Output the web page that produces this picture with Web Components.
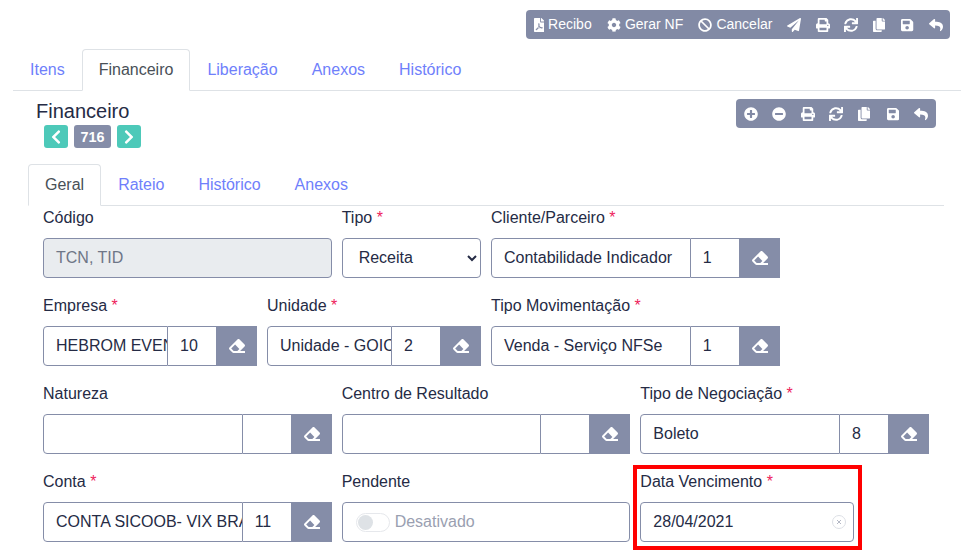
<!DOCTYPE html>
<html lang="pt-BR">
<head>
<meta charset="utf-8">
<title>Financeiro</title>
<style>
  html, body { margin: 0; height: 100%; overflow: hidden; background: #fff; }
  body { font-family: "Liberation Sans", Arial, sans-serif; font-size: 16px; color: #252b45; }
</style>
</head>
<body>
<app-page>
  <tool-bar slot="top">
    <tool-button icon="pdf">Recibo</tool-button>
    <tool-button icon="cog">Gerar NF</tool-button>
    <tool-button icon="ban">Cancelar</tool-button>
    <tool-button icon="plane"></tool-button>
    <tool-button icon="print"></tool-button>
    <tool-button icon="sync"></tool-button>
    <tool-button icon="copy"></tool-button>
    <tool-button icon="save"></tool-button>
    <tool-button icon="reply"></tool-button>
  </tool-bar>

  <tab-nav slot="tabs">
    <tab-item>Itens</tab-item>
    <tab-item active>Financeiro</tab-item>
    <tab-item>Liberação</tab-item>
    <tab-item>Anexos</tab-item>
    <tab-item>Histórico</tab-item>
  </tab-nav>

  <record-header slot="header" title="Financeiro" record="716">
    <tool-bar>
      <tool-button icon="plus"></tool-button>
      <tool-button icon="minus"></tool-button>
      <tool-button icon="print"></tool-button>
      <tool-button icon="sync"></tool-button>
      <tool-button icon="copy"></tool-button>
      <tool-button icon="save"></tool-button>
      <tool-button icon="reply"></tool-button>
    </tool-bar>
  </record-header>

  <tab-nav slot="subtabs">
    <tab-item active>Geral</tab-item>
    <tab-item>Rateio</tab-item>
    <tab-item>Histórico</tab-item>
    <tab-item>Anexos</tab-item>
  </tab-nav>

  <form-row slot="form">
    <form-field label="Código" span="4"><text-input value="TCN, TID" disabled></text-input></form-field>
    <form-field label="Tipo" required span="2"><select-input value="Receita"></select-input></form-field>
    <form-field label="Cliente/Parceiro" required span="4"><lookup-input text="Contabilidade Indicador" code="1"></lookup-input></form-field>
  </form-row>
  <form-row slot="form">
    <form-field label="Empresa" required span="3"><lookup-input text="HEBROM EVEN" code="10"></lookup-input></form-field>
    <form-field label="Unidade" required span="3"><lookup-input text="Unidade - GOIC" code="2"></lookup-input></form-field>
    <form-field label="Tipo Movimentação" required span="4"><lookup-input text="Venda - Serviço NFSe" code="1"></lookup-input></form-field>
  </form-row>
  <form-row slot="form">
    <form-field label="Natureza" span="4"><lookup-input></lookup-input></form-field>
    <form-field label="Centro de Resultado" span="4"><lookup-input></lookup-input></form-field>
    <form-field label="Tipo de Negociação" required span="4"><lookup-input text="Boleto" code="8"></lookup-input></form-field>
  </form-row>
  <form-row slot="form">
    <form-field label="Conta" required span="4"><lookup-input text="CONTA SICOOB- VIX BRA" code="11"></lookup-input></form-field>
    <form-field label="Pendente" span="4"><switch-input label="Desativado"></switch-input></form-field>
    <form-field label="Data Vencimento" required span="3" marked><text-input value="28/04/2021" clearable></text-input></form-field>
  </form-row>
</app-page>

<script>
const ICONS = {
  pdf: [384, "M181.9 256.1c-5-16-4.9-46.9-2-46.9 8.4 0 7.6 36.9 2 46.9zm-1.7 47.2c-7.7 20.2-17.3 43.3-28.4 62.7 18.3-7 39-17.2 62.9-21.9-12.7-9.6-24.9-23.4-34.5-40.8zM86.1 428.1c0 .8 13.2-5.4 34.9-40.2-6.7 6.3-29.1 24.5-34.9 40.2zM248 160h136v328c0 13.3-10.7 24-24 24H24c-13.3 0-24-10.7-24-24V24C0 10.7 10.7 0 24 0h200v136c0 13.2 10.8 24 24 24zm-8 171.8c-20-12.2-33.3-29-42.7-53.8 4.5-18.5 11.6-46.6 6.2-64.2-4.7-29.4-42.4-26.5-47.8-6.8-5 18.3-.4 44.1 8.1 77-11.6 27.6-28.7 64.6-40.8 85.8-.1 0-.1.1-.2.1-27.1 13.9-73.6 44.5-54.5 68 5.6 6.9 16 10 21.5 10 17.9 0 35.7-18 61.1-61.8 25.8-8.5 54.1-19.1 79-23.2 21.7 11.8 47.1 19.5 64 19.5 29.2 0 31.2-32 19.7-43.4-13.9-13.6-54.3-9.7-73.6-7.2zM377 105L279 7c-4.5-4.5-10.6-7-17-7h-6v128h128v-6.1c0-6.3-2.5-12.4-7-16.9zm-74.1 255.3c4.1-2.7-2.5-11.9-42.8-9 37.1 15.8 42.8 9 42.8 9z"],
  cog: [512, "M487.4 315.7l-42.6-24.6c4.3-23.2 4.3-47 0-70.2l42.6-24.6c4.9-2.8 7.1-8.6 5.5-14-11.1-35.6-30-67.8-54.7-94.6-3.8-4.1-10-5.1-14.8-2.3L380.8 110c-17.9-15.4-38.5-27.3-60.8-35.1V25.8c0-5.6-3.9-10.5-9.4-11.7-36.7-8.2-74.3-7.8-109.2 0-5.5 1.2-9.4 6.1-9.4 11.7V75c-22.2 7.9-42.8 19.8-60.8 35.1L88.7 85.5c-4.9-2.8-11-1.9-14.8 2.3-24.7 26.7-43.6 58.9-54.7 94.6-1.7 5.4.6 11.2 5.5 14L67.3 221c-4.3 23.2-4.3 47 0 70.2l-42.6 24.6c-4.9 2.8-7.1 8.6-5.5 14 11.1 35.6 30 67.8 54.7 94.6 3.8 4.1 10 5.1 14.8 2.3l42.6-24.6c17.9 15.4 38.5 27.3 60.8 35.1v49.2c0 5.6 3.9 10.5 9.4 11.7 36.7 8.2 74.3 7.8 109.2 0 5.5-1.2 9.4-6.1 9.4-11.7v-49.2c22.2-7.9 42.8-19.8 60.8-35.1l42.6 24.6c4.9 2.8 11 1.9 14.8-2.3 24.7-26.7 43.6-58.9 54.7-94.6 1.5-5.5-.7-11.3-5.6-14.1zM256 336c-44.1 0-80-35.9-80-80s35.9-80 80-80 80 35.9 80 80-35.9 80-80 80z"],
  ban: [512, "M256 8C119.034 8 8 119.033 8 256s111.034 248 248 248 248-111.034 248-248S392.967 8 256 8zm130.108 117.892c65.448 65.448 70 165.481 20.677 235.637L150.47 105.216c70.204-49.356 170.226-44.735 235.638 20.676zM125.892 386.108c-65.448-65.448-70-165.481-20.677-235.637L361.53 406.784c-70.203 49.356-170.226 44.736-235.638-20.676z"],
  plane: [512, "M476 3.2L12.5 270.6c-18.1 10.4-15.8 35.6 2.2 43.2L121 358.4l287.3-253.2c5.5-4.9 13.3 2.6 8.6 8.3L176 407v80.5c0 23.6 28.5 32.9 42.5 15.8L282 426l124.6 52.2c14.2 6 30.4-2.9 33-18.2l72-432C515 7.8 493.3-6.8 476 3.2z"],
  print: [512, "M448 192V77.25c0-8.49-3.37-16.62-9.37-22.63L393.37 9.37c-6-6-14.14-9.37-22.63-9.37H96C78.33 0 64 14.33 64 32v160c-35.35 0-64 28.65-64 64v112c0 8.84 7.16 16 16 16h48v96c0 17.67 14.33 32 32 32h320c17.67 0 32-14.33 32-32v-96h48c8.84 0 16-7.16 16-16V256c0-35.35-28.65-64-64-64zm-64 256H128v-96h256v96zm0-224H128V64h192v48c0 8.84 7.16 16 16 16h48v96zm48 72c-13.25 0-24-10.75-24-24 0-13.26 10.75-24 24-24s24 10.74 24 24c0 13.25-10.75 24-24 24z"],
  sync: [512, "M440.65 12.57l4 82.77A247.16 247.16 0 0 0 255.83 8C134.73 8 33.91 94.92 12.29 209.82A12 12 0 0 0 24.09 224h49.05a12 12 0 0 0 11.67-9.26 175.91 175.91 0 0 1 317-56.94l-101.46-4.86a12 12 0 0 0-12.57 12v47.41a12 12 0 0 0 12 12H500a12 12 0 0 0 12-12V12a12 12 0 0 0-12-12h-47.37a12 12 0 0 0-11.98 12.57zM255.83 432a175.61 175.61 0 0 1-146-77.8l101.8 4.87a12 12 0 0 0 12.57-12v-47.4a12 12 0 0 0-12-12H12a12 12 0 0 0-12 12V500a12 12 0 0 0 12 12h47.35a12 12 0 0 0 12-12.6l-4.15-82.57A247.17 247.17 0 0 0 255.83 504c121.11 0 221.93-86.92 243.55-201.82a12 12 0 0 0-11.8-14.18h-49.05a12 12 0 0 0-11.67 9.26A175.86 175.86 0 0 1 255.83 432z"],
  copy: [448, "M320 448v40c0 13.255-10.745 24-24 24H24c-13.255 0-24-10.745-24-24V120c0-13.255 10.745-24 24-24h72v296c0 30.879 25.121 56 56 56h168zm0-344V0H152c-13.255 0-24 10.745-24 24v368c0 13.255 10.745 24 24 24h272c13.255 0 24-10.745 24-24V128H344c-13.2 0-24-10.8-24-24zm120.971-31.029L375.029 7.029A24 24 0 0 0 358.059 0H352v96h96v-6.059a24 24 0 0 0-7.029-16.97z"],
  save: [448, "M433.941 129.941l-83.882-83.882A48 48 0 0 0 316.118 32H48C21.49 32 0 53.49 0 80v352c0 26.51 21.49 48 48 48h352c26.51 0 48-21.49 48-48V163.882a48 48 0 0 0-14.059-33.941zM224 416c-35.346 0-64-28.654-64-64 0-35.346 28.654-64 64-64s64 28.654 64 64c0 35.346-28.654 64-64 64zm96-304.52V212c0 6.627-5.373 12-12 12H76c-6.627 0-12-5.373-12-12V108c0-6.627 5.373-12 12-12h228.52c3.183 0 6.235 1.264 8.485 3.515l3.48 3.48A11.996 11.996 0 0 1 320 111.48z"],
  reply: [512, "M8.309 189.836L184.313 37.851C199.719 24.546 224 35.347 224 56.015v80.053c160.629 1.839 288 34.032 288 186.258 0 61.441-39.581 122.309-83.333 154.132-13.653 9.931-33.111-2.533-28.077-18.631 45.344-145.012-21.507-183.51-176.59-185.742V360c0 20.7-24.3 31.453-39.687 18.164l-176.004-152c-11.071-9.562-11.086-26.753 0-36.328z"],
  plus: [512, "M256 8C119 8 8 119 8 256s111 248 248 248 248-111 248-248S393 8 256 8zm144 276c0 6.6-5.4 12-12 12h-92v92c0 6.6-5.4 12-12 12h-56c-6.6 0-12-5.4-12-12v-92h-92c-6.6 0-12-5.4-12-12v-56c0-6.6 5.4-12 12-12h92v-92c0-6.6 5.4-12 12-12h56c6.6 0 12 5.4 12 12v92h92c6.6 0 12 5.4 12 12v56z"],
  minus: [512, "M256 8C119 8 8 119 8 256s111 248 248 248 248-111 248-248S393 8 256 8zM124 296c-6.6 0-12-5.4-12-12v-56c0-6.6 5.4-12 12-12h264c6.6 0 12 5.4 12 12v56c0 6.6-5.4 12-12 12H124z"],
  eraser: [512, "M497.941 273.941c18.745-18.745 18.745-49.137 0-67.882l-160-160c-18.745-18.745-49.136-18.746-67.883 0l-256 256c-18.745 18.745-18.745 49.137 0 67.882l96 96A48.004 48.004 0 0 0 144 480h356c6.627 0 12-5.373 12-12v-40c0-6.627-5.373-12-12-12H355.883l142.058-142.059zm-302.627-62.627l137.373 137.373L265.373 416H150.628l-80-80 124.686-124.686z"],
  left: [320, "M34.52 239.03L228.87 44.69c9.37-9.37 24.57-9.37 33.94 0l22.67 22.67c9.36 9.36 9.37 24.52.04 33.9L131.49 256l154.02 154.75c9.34 9.38 9.32 24.54-.04 33.9l-22.67 22.67c-9.37 9.37-24.57 9.37-33.94 0L34.52 272.97c-9.37-9.37-9.37-24.57 0-33.94z"],
  right: [320, "M285.476 272.971L91.132 467.314c-9.373 9.373-24.569 9.373-33.941 0l-22.667-22.667c-9.357-9.357-9.375-24.522-.04-33.901L188.505 256 34.484 101.255c-9.335-9.379-9.317-24.544.04-33.901l22.667-22.667c9.373-9.373 24.569-9.373 33.941 0L285.475 239.03c9.373 9.372 9.373 24.568.001 33.941z"]
};

class AppIcon extends HTMLElement {
  connectedCallback() {
    const [w, d] = ICONS[this.getAttribute("name")];
    const size = Number(this.getAttribute("size") || 14);
    this.attachShadow({ mode: "open" }).innerHTML = `
      <style>:host { display: inline-flex; flex: none; } svg { display: block; fill: currentColor; }</style>
      <svg width="${(size * w) / 512}" height="${size}" viewBox="0 0 ${w} 512"><path d="${d}"/></svg>`;
  }
}

class AppPage extends HTMLElement {
  constructor() {
    super();
    this.attachShadow({ mode: "open" }).innerHTML = `
      <style>
        :host { display: block; padding: 10px 0 0 13px; }
        .top { display: flex; justify-content: flex-end; padding-right: 11px; margin-bottom: 10px; }
        .body { padding: 0 17px 0 15px; }
        .form { display: flex; flex-direction: column; gap: 16px; padding: 0 15px; }
      </style>
      <div class="top"><slot name="top"></slot></div>
      <slot name="tabs"></slot>
      <slot name="header"></slot>
      <div class="body">
        <slot name="subtabs"></slot>
        <div class="form"><slot name="form"></slot></div>
      </div>`;
  }
}

class ToolBar extends HTMLElement {
  constructor() {
    super();
    this.attachShadow({ mode: "open" }).innerHTML = `
      <style>
        :host { display: inline-flex; height: 29px; background: #828aa5; border-radius: 4px; color: #fff; }
      </style>
      <slot></slot>`;
  }
}

class ToolButton extends HTMLElement {
  connectedCallback() {
    this.attachShadow({ mode: "open" }).innerHTML = `
      <style>
        :host { display: inline-flex; align-items: center; justify-content: center; gap: 4px; min-width: 28.33px; box-sizing: border-box; font-size: 14px; line-height: 21px; }
        :host(:not(:empty)) { padding: 0 7.6px; }
      </style>
      <app-icon name="${this.getAttribute("icon")}"></app-icon><slot></slot>`;
  }
}

class TabNav extends HTMLElement {
  constructor() {
    super();
    this.attachShadow({ mode: "open" }).innerHTML = `
      <style>:host { display: flex; border-bottom: 1px solid #dee2e6; }</style>
      <slot></slot>`;
  }
}

class TabItem extends HTMLElement {
  constructor() {
    super();
    this.attachShadow({ mode: "open" }).innerHTML = `
      <style>
        :host { display: block; padding: 8px 16px; line-height: 24px; border: 1px solid transparent; border-radius: 4px 4px 0 0; margin-bottom: -1px; color: #6f7ffb; }
        :host([active]) { color: #495057; background: #fff; border-color: #dee2e6 #dee2e6 #fff; }
      </style>
      <slot></slot>`;
  }
}

class RecordHeader extends HTMLElement {
  connectedCallback() {
    this.attachShadow({ mode: "open" }).innerHTML = `
      <style>
        :host { display: flex; justify-content: space-between; align-items: flex-start; padding: 8px 25px 16px 23px; height: 49px; }
        ::slotted(tool-bar) { padding: 0 .85px; }
        h1 { margin: 0; font-size: 20px; font-weight: 400; line-height: 24px; color: #252b45; }
        .pager { display: flex; gap: 6px; margin: 2px 0 0 8px; height: 23px; }
        .pager span { display: flex; align-items: center; justify-content: center; min-width: 24px; border-radius: 3px; background: #4dc9b9; color: #fff; }
        .pager .num { background: #858da8; width: 37px; font-size: 14.4px; font-weight: 700; }
      </style>
      <div>
        <h1>${this.getAttribute("title")}</h1>
        <div class="pager">
          <span><app-icon name="left" size="16"></app-icon></span>
          <span class="num">${this.getAttribute("record")}</span>
          <span><app-icon name="right" size="16"></app-icon></span>
        </div>
      </div>
      <slot></slot>`;
  }
}

class FormRow extends HTMLElement {
  constructor() {
    super();
    this.attachShadow({ mode: "open" }).innerHTML = `
      <style>:host { display: grid; grid-template-columns: repeat(12, minmax(0, 1fr)); column-gap: 10px; }</style>
      <slot></slot>`;
  }
}

class FormField extends HTMLElement {
  connectedCallback() {
    this.style.gridColumn = `span ${this.getAttribute("span") || 4}`;
    const star = this.hasAttribute("required") ? ` <b>*</b>` : "";
    this.attachShadow({ mode: "open" }).innerHTML = `
      <style>
        :host { display: block; position: relative; min-width: 0; }
        label { display: block; height: 23px; line-height: 23px; margin-bottom: 9px; }
        b { font-weight: 400; color: #ee1c5b; }
        .mark { position: absolute; left: -7px; right: -8px; top: -5px; bottom: -8px; border: 4px solid #f00; pointer-events: none; }
      </style>
      <label>${this.getAttribute("label")}${star}</label>
      <slot></slot>
      ${this.hasAttribute("marked") ? `<div class="mark"></div>` : ""}`;
  }
}

const BOX = `box-sizing: border-box; height: 40px; border: 1px solid #858da8; background: #fff; line-height: 38px;`;

class TextInput extends HTMLElement {
  connectedCallback() {
    const clear = this.hasAttribute("clearable")
      ? `<svg width="14" height="14" viewBox="0 0 14 14"><circle cx="7" cy="7" r="6.5" fill="none" stroke="#dcdfe5"/><path d="M5 5l4 4M9 5l-4 4" stroke="#b4b8c5"/></svg>`
      : "";
    this.attachShadow({ mode: "open" }).innerHTML = `
      <style>
        :host { display: block; }
        div { ${BOX} display: flex; align-items: center; justify-content: space-between; padding: 0 7px 0 12px; border-radius: 4px; }
        :host([disabled]) div { background: #e9ecef; color: #6e7687; }
      </style>
      <div><span>${this.getAttribute("value")}</span>${clear}</div>`;
  }
}

class SelectInput extends HTMLElement {
  connectedCallback() {
    this.attachShadow({ mode: "open" }).innerHTML = `
      <style>
        :host { display: block; }
        select { ${BOX} display: block; width: 100%; padding: 0 12px 2px; border-radius: 4px; font: inherit; color: inherit; }
      </style>
      <select><option>${this.getAttribute("value")}</option></select>`;
  }
}

class LookupInput extends HTMLElement {
  connectedCallback() {
    this.attachShadow({ mode: "open" }).innerHTML = `
      <style>
        :host { display: flex; }
        .text { ${BOX} flex: 1; min-width: 0; padding-left: 12px; border-radius: 4px 0 0 4px; overflow: hidden; white-space: nowrap; }
        .code { ${BOX} flex: none; width: 48px; padding-left: 12px; border-width: 1px 0; }
        .clear { flex: none; display: flex; align-items: center; justify-content: center; box-sizing: border-box; width: 41px; height: 40px; padding-left: 1px; background: #858da8; color: #fff; }
      </style>
      <div class="text">${this.getAttribute("text") || ""}</div>
      <div class="code">${this.getAttribute("code") || ""}</div>
      <div class="clear"><app-icon name="eraser" size="16"></app-icon></div>`;
  }
}

class SwitchInput extends HTMLElement {
  connectedCallback() {
    this.attachShadow({ mode: "open" }).innerHTML = `
      <style>
        :host { display: flex; align-items: center; gap: 5px; ${BOX} padding-left: 13px; border-radius: 4px; color: #9a9fb1; }
        .track { display: flex; align-items: center; box-sizing: border-box; width: 34px; height: 19px; padding: 1px; border: 1px solid #e6e8ec; border-radius: 10px; }
        .knob { width: 15px; height: 15px; border-radius: 50%; background: #dee2e6; }
      </style>
      <span class="track"><span class="knob"></span></span>
      <span>${this.getAttribute("label")}</span>`;
  }
}

customElements.define("app-icon", AppIcon);
customElements.define("app-page", AppPage);
customElements.define("tool-bar", ToolBar);
customElements.define("tool-button", ToolButton);
customElements.define("tab-nav", TabNav);
customElements.define("tab-item", TabItem);
customElements.define("record-header", RecordHeader);
customElements.define("form-row", FormRow);
customElements.define("form-field", FormField);
customElements.define("text-input", TextInput);
customElements.define("select-input", SelectInput);
customElements.define("lookup-input", LookupInput);
customElements.define("switch-input", SwitchInput);
</script>
</body>
</html>
